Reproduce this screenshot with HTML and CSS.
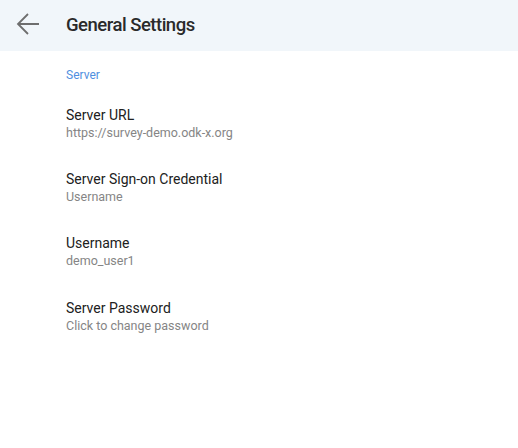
FILE: index.html
```html
<!DOCTYPE html>
<html lang="en">
<head>
  <meta charset="UTF-8">
  <title>General Settings</title>
  <link rel="stylesheet" href="styles.css">
</head>
<body>
  <div id="app-bar">
    <button class="back-button" aria-label="Back">
      <svg width="24" height="24" viewBox="0 0 24 24">
        <path d="M2 10h21M12 0L2 10l10 10" fill="none" stroke="#6e6e6e" stroke-width="1.8"/>
      </svg>
    </button>
    <h1>General Settings</h1>
  </div>

  <div class="pref-list">
    <div class="pref-category">Server</div>

    <div class="pref-row">
      <div class="pref-title">Server URL</div>
      <div class="pref-summary">https://survey-demo.odk-x.org</div>
    </div>
    <div class="pref-row">
      <div class="pref-title">Server Sign-on Credential</div>
      <div class="pref-summary">Username</div>
    </div>
    <div class="pref-row">
      <div class="pref-title">Username</div>
      <div class="pref-summary">demo_user1</div>
    </div>
    <div class="pref-row">
      <div class="pref-title">Server Password</div>
      <div class="pref-summary">Click to change password</div>
    </div>
  </div>
</body>
</html>
```

FILE: styles.css
```css
body {
  margin: 0;
  background-color: #ffffff;
  font-family: Roboto, "Noto Sans", sans-serif;
  color: #212121;
}

#app-bar {
  display: flex;
  align-items: center;
  height: 51px;
  background-color: #f1f6fa;
}

.back-button {
  display: flex;
  align-items: center;
  justify-content: center;
  width: 66px;
  height: 51px;
  padding: 0;
  border: none;
  background: none;
  cursor: pointer;
}

.back-button svg {
  width: 24px;
  height: 24px;
  margin: 1px 10px 0 0;
  overflow: visible;
}

h1 {
  margin: 0 0 1px 0;
  font-size: 18.5px;
  font-weight: 500;
  letter-spacing: -0.5px;
  color: #2a2a2a;
}

.pref-list {
  padding-left: 66px;
}

.pref-category {
  margin-top: 16px;
  font-size: 12px;
  line-height: 16px;
  color: #4f8fe0;
}

.pref-row {
  height: 64.33px;
  box-sizing: border-box;
  padding-top: 22.7px;
}

.pref-title {
  font-size: 14px;
  line-height: 19px;
}

.pref-summary {
  font-size: 12.5px;
  line-height: 16px;
  color: #858585;
}
```
